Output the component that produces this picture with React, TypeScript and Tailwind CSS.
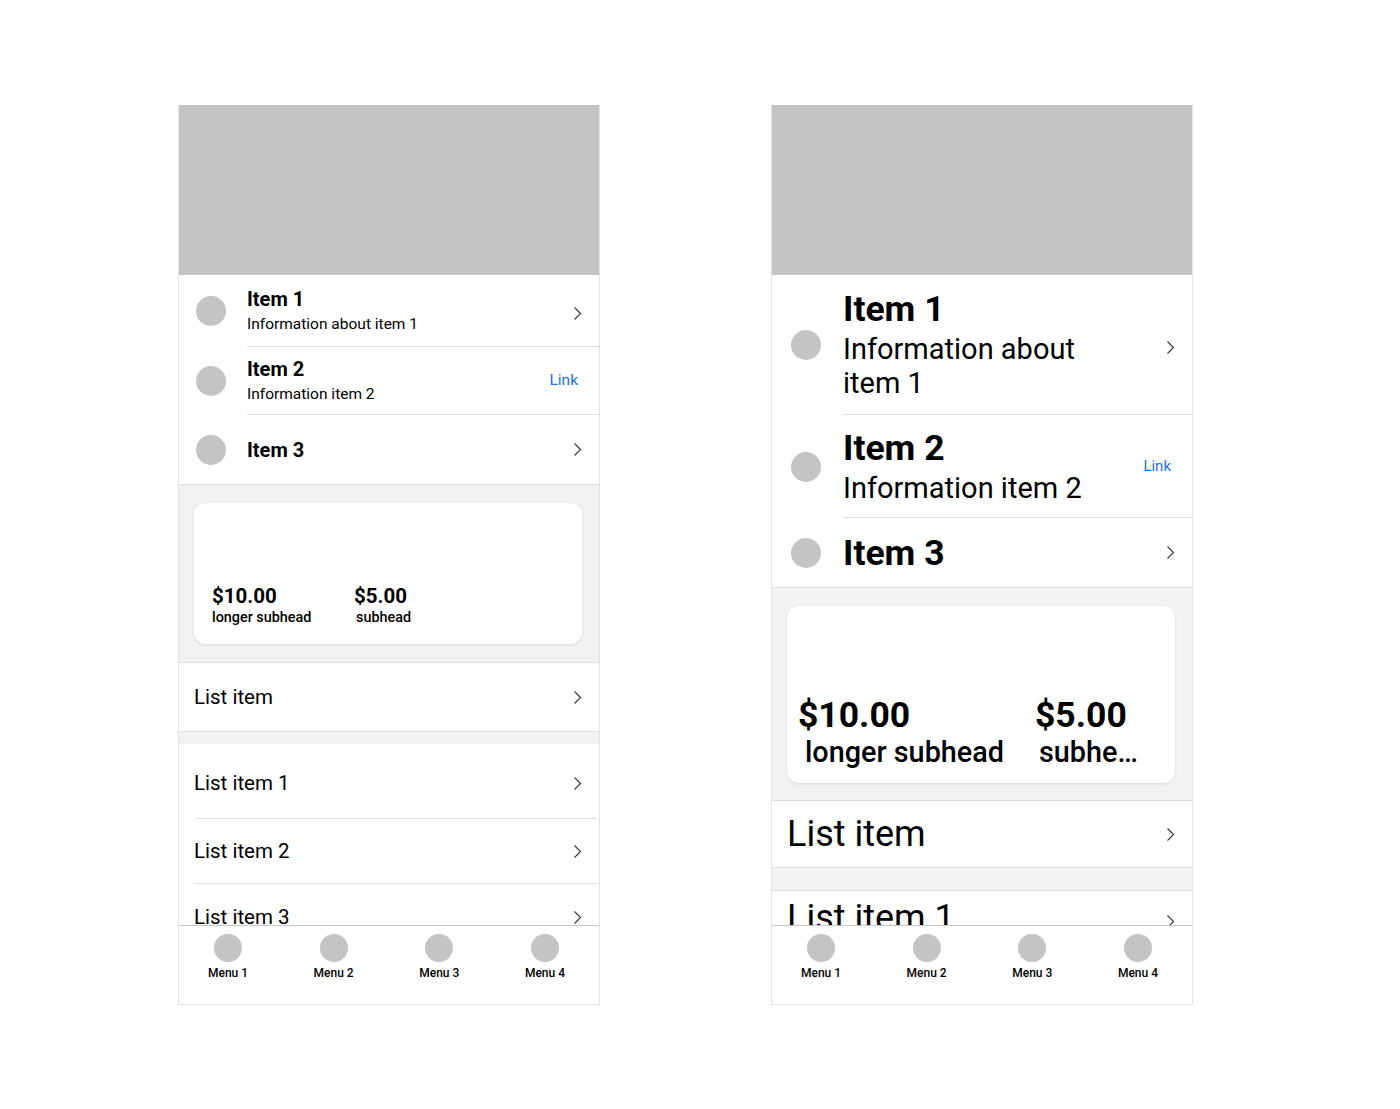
import { ReactNode } from 'react';

const CIRCLE = 'rounded-full bg-[#c4c4c4] shrink-0';

function Chevron() {
  return (
    <svg width="9" height="15" viewBox="0 0 9 15" fill="none" className="shrink-0">
      <path d="M1.5 1.5l6 6-6 6" stroke="#333" strokeWidth="1.1" />
    </svg>
  );
}

type Size = 'normal' | 'big';

const S = {
  normal: {
    rows: ['h-[72px]', 'h-[68px]', 'h-[70px]'],
    rowPad: 'pl-[17px]',
    gap: 'gap-[21px]',
    title: 'text-[20px] leading-[24px] font-bold',
    sub: 'text-[15.5px] leading-[20px] mt-[3px]',
    textBox: '',
    link: 'text-[15.5px]',
    section: 'h-[178px]',
    card: 'h-[141px] mt-[18px] ml-[15px] w-[388px] pl-[18px] pb-[16px]',
    priceCol: 'w-[142px]',
    price: 'text-[20.5px] leading-[24px] font-bold',
    subhead: 'text-[14.4px] leading-[20px] font-medium',
    sub1: '',
    sub2: 'pl-[2px]',
    col2: '',
    listRow: 'h-[69px] text-[20.5px]',
    gapBand: 'h-[12px]',
  },
  big: {
    rows: ['h-[140px]', 'h-[103px]', 'h-[70px]'],
    rowPad: 'pl-[19px]',
    gap: 'gap-[22px]',
    title: 'text-[35.5px] leading-[40px] font-bold',
    sub: 'text-[29px] leading-[34px] mt-[3px]',
    textBox: 'max-w-[262px]',
    link: 'text-[15px]',
    section: 'h-[213px]',
    card: 'h-[177px] mt-[18px] ml-[15px] w-[388px] pl-[11px] pb-[14px]',
    priceCol: 'w-[237px]',
    price: 'text-[35.5px] leading-[40px] font-bold',
    subhead: 'text-[28.8px] leading-[34px] font-medium',
    sub1: 'pl-[7px]',
    sub2: 'pl-[4px]',
    col2: 'w-[112px]',
    listRow: 'h-[67px] text-[36px]',
    gapBand: 'h-[22px]',
  },
};

function ItemRow({ size, idx, title, info, right, last }: { size: Size; idx: number; title: string; info?: string; right: ReactNode; last?: boolean }) {
  const s = S[size];
  return (
    <div className={`flex items-stretch ${s.rows[idx]} ${s.rowPad} ${s.gap} ${last ? 'border-b border-[#dedede]' : ''}`}>
      <div className="flex items-center">
        <div className={`${CIRCLE} w-[30px] h-[30px]`} />
      </div>
      <div className={`flex-1 flex items-center justify-between ${last ? '' : 'border-b border-[#dedede]'}`}>
        <div className={s.textBox}>
          <p className={s.title}>{title}</p>
          {info && <p className={s.sub}>{info}</p>}
        </div>
        {right}
      </div>
    </div>
  );
}

function Phone({ size }: { size: Size }) {
  const s = S[size];
  const big = size === 'big';
  return (
    <div className="w-[422px] h-[900px] border-x border-b border-[#e3e3e3] flex flex-col overflow-hidden bg-white">
      <div className="h-[170px] bg-[#c4c4c4] -mx-px shrink-0" />

      <div className="flex-1 overflow-hidden">
        <ItemRow size={size} idx={0} title="Item 1" info="Information about item 1" right={<div className="pr-[17px] pt-[6px]"><Chevron /></div>} />
        <ItemRow size={size} idx={1} title="Item 2" info="Information item 2" right={<span className={`pr-[21px] ${s.link} text-[#1a73e8]`}>Link</span>} />
        <ItemRow size={size} idx={2} title="Item 3" last right={<div className="pr-[17px]"><Chevron /></div>} />

        <div className={`${s.section} bg-[#f2f2f2] border-b border-[#dedede] overflow-hidden`}>
          <div className={`${s.card} bg-white rounded-[12px] shadow-[0_1px_3px_rgba(0,0,0,0.1)] flex items-end`}>
            <div className={s.priceCol}>
              <p className={s.price}>$10.00</p>
              <p className={`${s.subhead} ${s.sub1} whitespace-nowrap`}>longer subhead</p>
            </div>
            <div className={s.col2}>
              <p className={s.price}>$5.00</p>
              <p className={`${s.subhead} ${s.sub2} truncate`}>subhead</p>
            </div>
          </div>
        </div>

        <div className={`${s.listRow} flex items-center justify-between pl-[15px] pr-[17px] border-b border-[#dedede]`}>
          <span>List item</span>
          <Chevron />
        </div>
        <div className={`${s.gapBand} bg-[#f2f2f2]`} />

        {big ? (
          <div className="border-t border-[#dedede] h-[80px] flex items-start justify-between pl-[15px] pr-[17px] pt-[7px] text-[36px] leading-[40px]">
            <span>List item 1</span>
            <div className="pt-[16px]">
              <Chevron />
            </div>
          </div>
        ) : (
          <>
            <div className="h-[74px] flex items-center justify-between pl-[15px] pr-[17px] pt-[4px] text-[20.5px]">
              <span>List item 1</span>
              <Chevron />
            </div>
            <div className="ml-[17px] mr-[2px] border-b border-[#dedede]" />
            <div className="h-[64px] flex items-center justify-between pl-[15px] pr-[17px] text-[20.5px]">
              <span>List item 2</span>
              <Chevron />
            </div>
            <div className="ml-[17px] mr-[2px] border-b border-[#dedede]" />
            <div className="h-[66px] flex items-center justify-between pl-[15px] pr-[17px] text-[20.5px]">
              <span>List item 3</span>
              <Chevron />
            </div>
          </>
        )}
      </div>

      <nav className="h-[79px] shrink-0 border-t border-[#c8c8c8] flex justify-between pl-[27px] pr-[32px] pt-[8px]">
        {['Menu 1', 'Menu 2', 'Menu 3', 'Menu 4'].map(m => (
          <div key={m} className="w-[44px] flex flex-col items-center gap-[4px]">
            <div className={`${CIRCLE} w-[28px] h-[28px]`} />
            <span className="text-[12px] leading-[14px] font-medium whitespace-nowrap">{m}</span>
          </div>
        ))}
      </nav>
    </div>
  );
}

export default function App() {
  return (
    <div className="w-[1400px] h-[1109px] bg-white text-black font-['Roboto',sans-serif] pl-[178px] pt-[105px] flex gap-[171px]">
      <Phone size="normal" />
      <Phone size="big" />
    </div>
  );
}
